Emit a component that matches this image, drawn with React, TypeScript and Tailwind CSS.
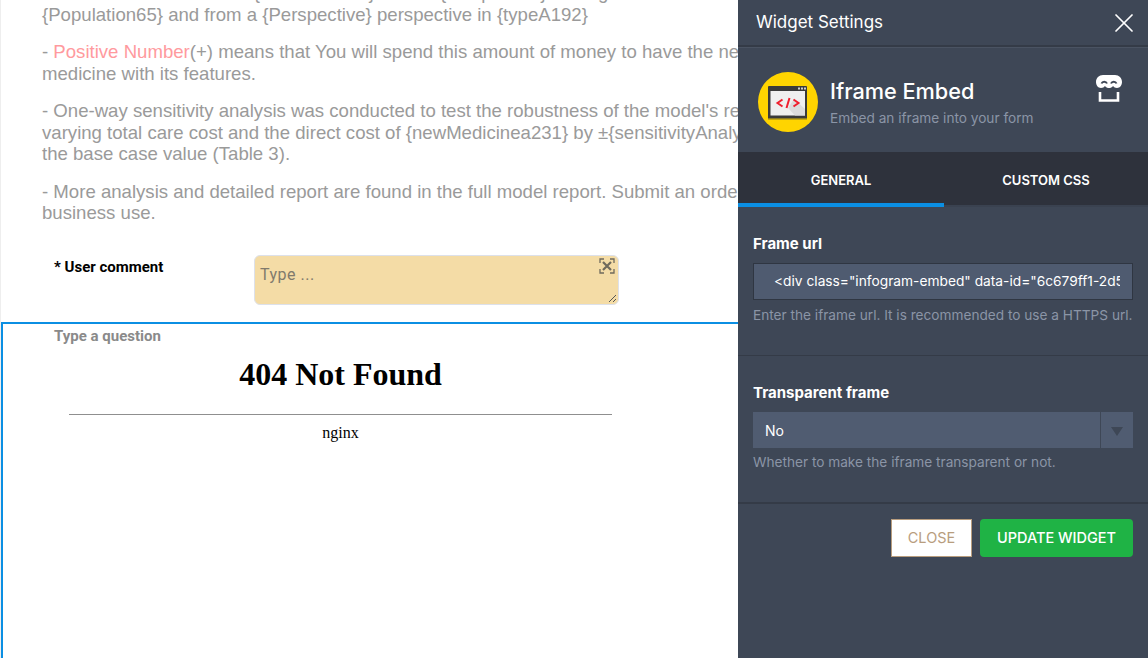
import { X } from "lucide-react";

function IframeIcon() {
	return (
		<svg width="60" height="60" viewBox="0 0 60 60" className="shrink-0">
			<circle cx="30" cy="30" r="30" fill="#ffd400" />
			<rect x="10" y="14" width="39" height="33" rx="1" fill="#3a3a3a" />
			<rect x="10" y="46" width="39" height="1.500" fill="#8a7a20" />
			<rect x="12.500" y="19" width="34.500" height="24.500" fill="#efefef" />
			<path d="M30 36l6-9 11 10v6.500H37z" fill="#dcdcdc" />
			<rect x="40" y="15.500" width="2" height="2" fill="#cfcfcf" />
			<rect x="43" y="15.500" width="2" height="2" fill="#cfcfcf" />
			<rect x="46" y="15.500" width="2" height="2" fill="#cfcfcf" />
			<path
				d="M24.500 27.500L19.500 31l5 3.500M35.500 27.500L40.500 31l-5 3.500M31.500 26L28.500 36"
				fill="none"
				stroke="#f01f2e"
				strokeWidth="2"
			/>
		</svg>
	);
}

function StoreIcon() {
	return (
		<svg width="28" height="29" viewBox="0 0 28 29" fill="none" className="shrink-0">
			<path
				d="M8 1h12c4 0 7 3 7 7 0 3-2 6-5 6-2 0-3-1-4-2-1 1.500-2.500 2-4 2s-3-.5-4-2c-1 1-2 2-4 2-3 0-5-3-5-6 0-4 3-7 7-7z"
				fill="#fff"
			/>
			<path d="M6.500 9.500c1-2.500 4.500-2.500 5.500 0M16 9.500c1-2.500 4.500-2.500 5.500 0" stroke="#3e4756" strokeWidth="2" />
			<path d="M5 18v8.500h18V18" stroke="#fff" strokeWidth="2.600" />
		</svg>
	);
}

function ExpandIcon() {
	return (
		<svg width="16" height="16" viewBox="0 0 16 16" fill="none" stroke="#6f6a5c" className="absolute right-[3px] top-[2px]">
			<path d="M1 5V1h4M11 1h4v4M15 11v4h-4M5 15H1v-4" strokeWidth="1.300" />
			<path d="M4 4l8 8M12 4l-8 8" strokeWidth="2.200" />
		</svg>
	);
}

export default function App() {
	return (
		<main className="flex h-[658px] w-[1148px] overflow-hidden bg-white font-['Liberation_Sans',sans-serif]">
			<section className="flex min-w-0 flex-1 flex-col border-l border-[#eeeeee]">
				<div className="-mt-[18px] h-[340px] shrink-0 overflow-hidden whitespace-nowrap pl-[41px] text-[18.6px] leading-[21.5px] text-[#9a9a9a]">
					<p>Results are estimated for {"{"}newMedicine{"}"} versus {"{"}comparator{"}"} among</p>
					<p>{"{"}Population65{"}"} and from a {"{"}Perspective{"}"} perspective in {"{"}typeA192{"}"}</p>
					<p className="mt-4">
						- <span className="text-[#ff9a9e]">Positive Number</span>(+) means that You will spend this amount of money to have the new
					</p>
					<p>medicine with its features.</p>
					<p className="mt-4">- One-way sensitivity analysis was conducted to test the robustness of the model's results by</p>
					<p>varying total care cost and the direct cost of {"{"}newMedicinea231{"}"} by ±{"{"}sensitivityAnalysis{"}"} of</p>
					<p>the base case value (Table 3).</p>
					<p className="mt-4">- More analysis and detailed report are found in the full model report. Submit an order for</p>
					<p>business use.</p>

					<div className="mt-[31px] flex items-start font-['Roboto',sans-serif]">
						<label className="mt-[3px] w-[212px] pl-[12px] text-[15px] font-bold leading-[18px] text-black">* User comment</label>
						<div className="relative h-[50px] w-[365px] rounded-md border border-[#dde1ea] bg-[#f4dca6] pl-[5px] pt-[9px] text-[16px] leading-[20px] tracking-[0.5px] text-[#807a6c]">
							Type ...
							<ExpandIcon />
							<svg width="9" height="9" viewBox="0 0 9 9" stroke="#555" className="absolute bottom-[1px] right-[1px]">
								<path d="M1 8l7-7M5 8l3-3" />
							</svg>
						</div>
					</div>
				</div>

				<div className="flex-1 border-l-2 border-t-2 border-[#0b8fe3] bg-white">
					<p className="pl-[51px] pt-[3px] font-['Roboto',sans-serif] text-[15px] font-bold leading-[18px] text-[#8a8a8a]">Type a question</p>
					<div className="ml-[66px] mt-[11px] w-[543px] text-center font-['Liberation_Serif',serif] text-black">
						<h1 className="text-[32px] font-bold leading-[37px]">404 Not Found</h1>
						<hr className="mt-[21px] border-t border-[#8f8f8f]" />
						<p className="mt-[9px] text-[16px] leading-[18px]">nginx</p>
					</div>
				</div>
			</section>

			<aside className="flex h-full w-[410px] shrink-0 flex-col bg-[#3e4756] font-['Inter',sans-serif]">
				<header className="flex h-[47px] shrink-0 items-center justify-between border-b-2 border-[#343b47] pl-[18px] pr-2">
					<h2 className="text-[17px] text-white">Widget Settings</h2>
					<X size={32} strokeWidth={1.3} className="text-white" />
				</header>

				<div className="flex h-[105px] shrink-0 items-center border-t border-[#4a5362] pl-5 pr-[25px] pt-[4px]">
					<IframeIcon />
					<div className="ml-3 flex-1">
						<h3 className="text-[21.7px] font-medium leading-[27px] text-white">Iframe Embed</h3>
						<p className="mt-[4px] whitespace-nowrap text-[13.65px] leading-[18px] text-[#8b95a6]">Embed an iframe into your form</p>
					</div>
					<div className="-mt-[27px]">
						<StoreIcon />
					</div>
				</div>

				<nav className="flex h-[55px] shrink-0 bg-[#2e323c] text-[13px] font-semibold text-white">
					<div className="flex w-[206px] items-center justify-center border-b-4 border-[#0b8fe3] pt-[6px]">GENERAL</div>
					<div className="flex flex-1 items-center justify-center border-b-2 border-[#3a4250] pt-[4px]">CUSTOM CSS</div>
				</nav>

				<div className="h-[149px] shrink-0 border-b border-[#343b47] px-[15px] pt-[28px]">
					<label className="block text-[15px] font-bold leading-[18px] text-white">Frame url</label>
					<div className="mt-[10px] flex h-[37px] items-center overflow-hidden border border-[#2f3642] bg-[#4f5b70] pl-5 pr-3 text-[13.75px] text-white">
						<span className="block overflow-hidden whitespace-nowrap">&lt;div class="infogram-embed" data-id="6c679ff1-2d5f-4a7e</span>
					</div>
					<p className="mt-[6px] whitespace-nowrap text-[13.65px] leading-[18px] text-[#8b95a6]">Enter the iframe url. It is recommended to use a HTTPS url.</p>
				</div>

				<div className="h-[148px] shrink-0 border-b-2 border-[#343b47] px-[15px] pt-[28px]">
					<label className="block text-[15px] font-bold leading-[18px] text-white">Transparent frame</label>
					<div className="mt-[10px] flex h-[36px] bg-[#505c71] text-[14px] text-white">
						<span className="flex flex-1 items-center pl-3">No</span>
						<span className="flex w-[33px] items-center justify-center border-l border-[#3e4756]">
							<span className="mt-[2px] h-0 w-0 border-x-[6px] border-t-[9px] border-x-transparent border-t-[#3e4756]" />
						</span>
					</div>
					<p className="mt-[5px] text-[13.65px] leading-[18px] text-[#8b95a6]">Whether to make the iframe transparent or not.</p>
				</div>

				<footer className="flex justify-end gap-2 px-[15px] pt-[15px] text-[14.5px]">
					<button type="button" className="h-[38px] w-[81px] border border-[#b89d7e] bg-white text-[#b89d7e]">CLOSE</button>
					<button type="button" className="h-[38px] w-[153px] rounded-sm bg-[#1fb345] font-medium text-white">UPDATE WIDGET</button>
				</footer>
			</aside>
		</main>
	);
}
